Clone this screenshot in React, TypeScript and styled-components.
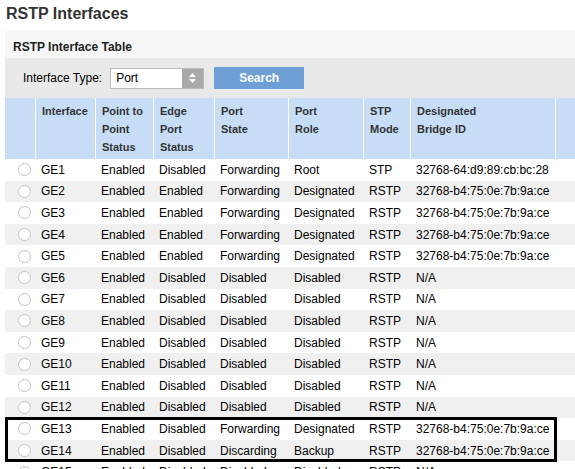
import React from "react";
import styled, { createGlobalStyle } from "styled-components";

const G = createGlobalStyle`
  html,body{margin:0;padding:0;background:#fff;overflow:hidden;}
  body{font-family:"Liberation Sans",Arial,sans-serif;font-size:12px;color:#000;}
`;
const Page = styled.div`width:575px;height:469px;overflow:hidden;`;
const Title = styled.h1`margin:0;padding:5px 0 0 6px;height:30px;box-sizing:border-box;font-size:16px;font-weight:bold;color:#333;`;
const Panel = styled.div`margin-left:5px;width:600px;`;
const PanelHead = styled.div`height:28px;background:#f6f6f6;padding:10px 0 0 8px;box-sizing:border-box;font-weight:bold;font-size:12px;color:#222;`;
const Filter = styled.div`height:40px;background:#e9e9e9;display:flex;align-items:center;padding-left:18px;gap:8px;`;
const Select = styled.div`width:94px;height:21px;background:#fff;border:1px solid #bbb;box-sizing:border-box;display:flex;align-items:center;padding-left:5px;position:relative;`;
const Spin = styled.div`position:absolute;right:0;top:0;bottom:0;width:21px;background:#a9a9a9;display:flex;flex-direction:column;align-items:center;justify-content:center;gap:2px;`;
const Btn = styled.div`margin-left:2px;width:90px;height:22px;background:#6e9fd6;color:#fff;font-weight:bold;display:flex;align-items:center;justify-content:center;`;
const cols = "30px 60px 58px 61px 74px 75px 47px 145px 50px";
const Head = styled.div`display:grid;grid-template-columns:${cols};height:61px;background:#c6ddf5;`;
const HCell = styled.div<{ $first?: boolean }>`border-left:${p => (p.$first ? "none" : "1px solid #fff")};padding:4px 0 0 6px;line-height:18px;font-weight:bold;color:#333;font-size:11px;`;
const Row = styled.div<{ $alt: boolean }>`display:grid;grid-template-columns:${cols};height:21.6px;align-items:center;background:${p => (p.$alt ? "#f0f0f0" : "#fff")};`;
const Cell = styled.div`padding-left:6px;white-space:nowrap;`;
const Radio = styled.span`display:block;margin-left:7px;width:13px;height:13px;border-radius:50%;border:1px solid #c4c4c4;background:#fff;box-sizing:border-box;`;
const Hi = styled.div`position:relative;`;
const Box = styled.div`position:absolute;left:0;top:-1px;width:552px;height:45px;border:3px solid #000;box-sizing:border-box;pointer-events:none;`;

const D = "32768-b4:75:0e:7b:9a:ce";
const rows: string[][] = [
  ["GE1","Enabled","Disabled","Forwarding","Root","STP","32768-64:d9:89:cb:bc:28"],
  ["GE2","Enabled","Enabled","Forwarding","Designated","RSTP",D],
  ["GE3","Enabled","Enabled","Forwarding","Designated","RSTP",D],
  ["GE4","Enabled","Enabled","Forwarding","Designated","RSTP",D],
  ["GE5","Enabled","Enabled","Forwarding","Designated","RSTP",D],
  ...[6,7,8,9,10,11,12].map(n=>[`GE${n}`,"Enabled","Disabled","Disabled","Disabled","RSTP","N/A"]),
  ["GE13","Enabled","Disabled","Forwarding","Designated","RSTP",D],
  ["GE14","Enabled","Disabled","Discarding","Backup","RSTP",D],
  ["GE15","Enabled","Disabled","Disabled","Disabled","RSTP","N/A"],
];
const R = ({ r, i }: { r: string[]; i: number }) => (
  <Row $alt={i % 2 === 1}><Cell><Radio /></Cell>{r.map((c, j) => <Cell key={j}>{c}</Cell>)}<Cell /></Row>
);

export default function App() {
  return (
    <Page>
      <G />
      <Title>RSTP Interfaces</Title>
      <Panel>
        <PanelHead>RSTP Interface Table</PanelHead>
        <Filter>
          <span>Interface Type:</span>
          <Select>Port<Spin>
            <svg width="7" height="4"><path d="M0 4L3.5 0L7 4Z" fill="#fff"/></svg>
            <svg width="7" height="4"><path d="M0 0L3.5 4L7 0Z" fill="#fff"/></svg>
          </Spin></Select>
          <Btn>Search</Btn>
        </Filter>
        <Head>
          <HCell $first />
          <HCell>Interface</HCell>
          <HCell>Point to<br/>Point<br/>Status</HCell>
          <HCell>Edge<br/>Port<br/>Status</HCell>
          <HCell>Port<br/>State</HCell>
          <HCell>Port<br/>Role</HCell>
          <HCell>STP<br/>Mode</HCell>
          <HCell>Designated<br/>Bridge ID</HCell>
          <HCell />
        </Head>
        {rows.slice(0, 12).map((r, i) => <R key={i} r={r} i={i} />)}
        <Hi>
          <R r={rows[12]} i={12} />
          <R r={rows[13]} i={13} />
          <Box />
        </Hi>
        <R r={rows[14]} i={14} />
      </Panel>
    </Page>
  );
}
